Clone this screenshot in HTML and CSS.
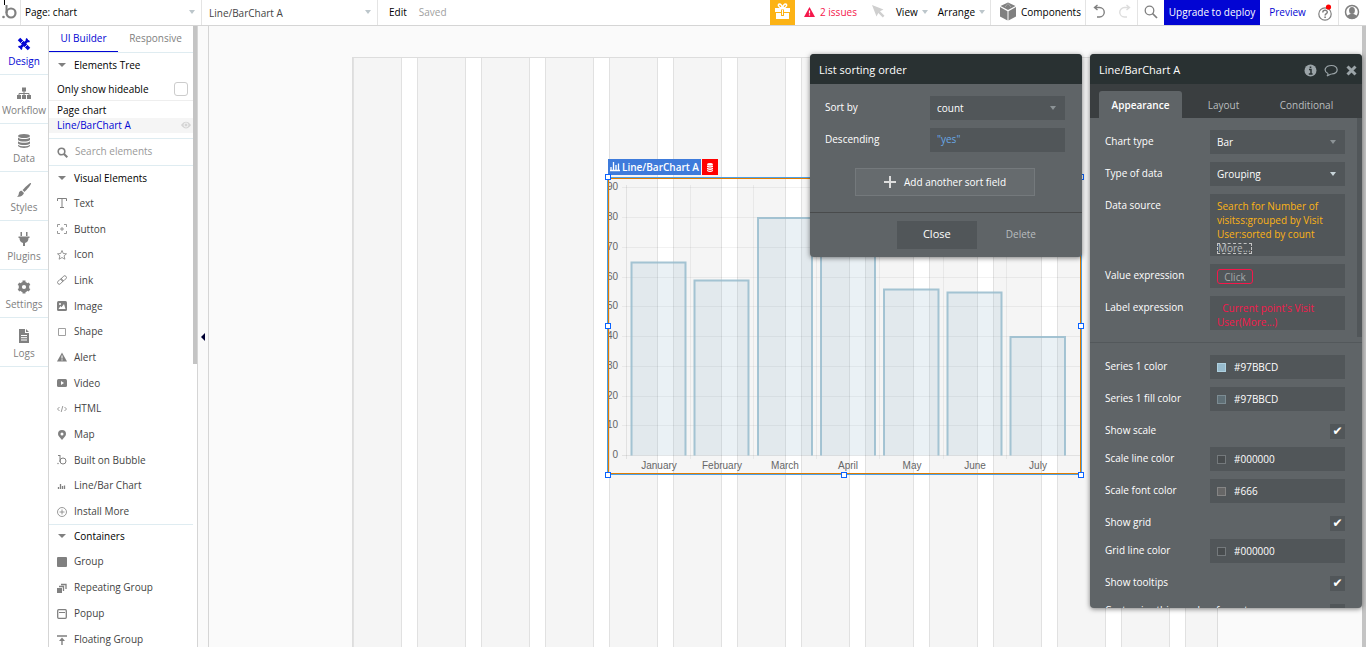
FILE: index.html
```html
<!DOCTYPE html>
<html lang="en">
<head>
<meta charset="utf-8">
<title>Page: chart</title>
<link rel="stylesheet" href="styles.css">
</head>
<body>
<header class="topbar">
  <a class="logo" href="#" aria-label="Home"><svg width="20" height="25" viewBox="0 0 20 25"><path d="M6.500 5v8" fill="none" stroke="#808080" stroke-width="2"/><circle cx="11" cy="13" r="4.500" fill="none" stroke="#808080" stroke-width="2.200"/><circle cx="3.500" cy="17" r="1.300" fill="#808080"/><path d="M4.500 0v5" stroke="#000"/></svg></a>
  <span class="pick pick-page"><select aria-label="Page"><option>Page: chart</option></select></span>
  <span class="pick pick-element"><select aria-label="Element"><option>Line/BarChart A</option></select></span>
  <button class="edit">Edit</button>
  <span class="saved">Saved</span>
  <span class="spacer"></span>
  <button class="gift" aria-label="Gift"><svg width="17" height="17" viewBox="0 0 17 17"><path d="M1 5h15v4H1zM2 10h13v6H2z" fill="#fff"/><path d="M8.500 5C4 5 3.500 1 5.500 1S8.500 5 8.500 5s1-4 3-4 1.500 4-3 4" fill="none" stroke="#fff" stroke-width="1.500"/><path d="M7 6.500h3V13H7z" fill="#fcb315"/><path d="M8 7h1v5H8z" fill="#fff"/></svg></button>
  <button class="issues"><svg width="11" height="10" viewBox="0 0 11 10"><path d="M5.500 0 11 10H0z" fill="#f5174b"/><path d="M5.500 3.500v3M5.500 7.300v1.200" stroke="#fff" stroke-width="1.200"/></svg>2 issues</button>
  <button class="arrow" aria-label="Pointer"><svg width="13" height="13" viewBox="0 0 13 13"><path d="M0 0 11.500 4.500 8 6.300l4.500 4.500-1.700 1.700L6.300 8 4.500 11.500z" fill="#cfcfcf"/></svg></button>
  <button class="menu">View<i class="caret"></i></button>
  <button class="menu">Arrange<i class="caret"></i></button>
  <button class="components"><svg width="16" height="19" viewBox="0 0 16 19"><path d="M8 .5 15.500 4 8 8 .5 4zM0 5l7.500 4.200V18.500L0 14.500zM16 5 8.500 9.200V18.500l7.500-4z" fill="#808080"/><path d="m5 5 3-3.500 3 3.500" fill="none" stroke="#a9a9a9"/></svg>Components</button>
  <button class="tool" aria-label="Undo"><svg width="14" height="15" viewBox="0 0 14 15"><path d="M5.500 1 2.500 3.500l3 2.500M3 3.500h4.500a4.700 4.700 0 0 1 0 9.500H5" fill="none" stroke="#808080" stroke-width="1.400"/></svg></button>
  <button class="tool redo" aria-label="Redo"><svg width="14" height="15" viewBox="0 0 14 15"><path d="M8.500 1l3 2.500-3 2.500M11 3.500H6.500a4.700 4.700 0 0 0 0 9.500H9" fill="none" stroke="#ddd" stroke-width="1.400"/></svg></button>
  <button class="tool find" aria-label="Search"><svg width="14" height="14" viewBox="0 0 14 14"><circle cx="5.500" cy="5.500" r="4.300" fill="none" stroke="#808080" stroke-width="1.300"/><path d="m8.500 8.500 4.500 4.500" stroke="#808080" stroke-width="1.700"/></svg></button>
  <button class="upgrade">Upgrade to deploy</button>
  <a class="preview" href="#">Preview</a>
  <button class="help" aria-label="Help"><svg width="16" height="18" viewBox="0 0 16 18"><circle cx="7" cy="10" r="6.200" fill="none" stroke="#808080" stroke-width="1.200"/><path d="M4.800 8.500c0-3 4.500-2.800 4.500-.3 0 1.500-2.200 1.500-2.200 3.300" fill="none" stroke="#808080" stroke-width="1.500"/><path d="M6.300 12.500h1.600V14H6.300z" fill="#808080"/><circle cx="10.500" cy="3" r="2.600" fill="#f00"/></svg></button>
  <button class="user" aria-label="Account"><svg width="16" height="16" viewBox="0 0 16 16"><circle cx="8" cy="8" r="6.500" fill="#fff" stroke="#808080" stroke-width="1.500"/><ellipse cx="8" cy="6.500" rx="2.900" ry="3.500" fill="#808080"/><path d="M3 12.500c1-2 3-2.500 5-2.500s4 .5 5 2.500c-2.500 3-7.500 3-10 0" fill="#808080"/></svg></button>
</header>

<main class="workspace">
  <nav class="rail">
    <a class="active" href="#"><svg viewBox="0 0 16 16"><g fill="none" stroke="#0205d3"><path d="M3 3l10 10" stroke-width="3.600"/><path d="M12 4 4 12" stroke-width="2.600"/><path d="M11 2.500c-1 1.500.5 3.500 2.500 2.500M5 13.500c1-1.500-.5-3.500-2.500-2.500" stroke-width="2"/></g><path d="m4.500 7.500 3-3M8.500 11.500l3-3" stroke="#fff" stroke-width=".8"/></svg>Design</a>
    <a href="#"><svg viewBox="0 0 16 16"><path d="M6 2.500h4v4H6zM1 10h4v4H1zM6 10h4v4H6zM11 10h4v4h-4z" fill="#808080"/><path d="M8 6v5M3 11V8.500h10V11" fill="none" stroke="#808080"/></svg>Workflow</a>
    <a href="#"><svg viewBox="0 0 16 16"><ellipse cx="8" cy="3" rx="6" ry="2" fill="#808080"/><path d="M2 4.500c2 2 10 2 12 0V7c-2 2-10 2-12 0zM2 8.300c2 2 10 2 12 0v2.200c-2 2-10 2-12 0zM2 11.700c2 2 10 2 12 0V13c-2 2.500-10 2.500-12 0z" fill="#808080"/></svg>Data</a>
    <a href="#"><svg viewBox="0 0 16 16"><path d="M15 1c1 1-4.500 7-6.500 9L6.500 8C9 5.500 14 0 15 1M5.700 8.700 8 11c-1 3-4 4.200-7 3.500 2-1 1.500-2.200 2-4 .5-1.200 1.500-1.800 2.700-1.800" fill="#808080"/></svg>Styles</a>
    <a href="#"><svg viewBox="0 0 16 16"><path d="M4.500 1h1.500v4H4.500zM10 1h1.500v4H10zM2.500 5.500h11V7h-1c0 2.500-1 4.500-3.500 5v3H7v-3C4.500 11.500 3.500 9.500 3.500 7h-1z" fill="#808080"/></svg>Plugins</a>
    <a href="#"><svg viewBox="0 0 16 16"><circle cx="8" cy="8" r="3.700" fill="none" stroke="#808080" stroke-width="3.200"/><path d="M8 1.500v2M8 12.500v2M2.400 4.800l1.700 1M11.900 10.200l1.700 1M2.400 11.200l1.700-1M11.900 5.800l1.700-1" stroke="#808080" stroke-width="3"/></svg>Settings</a>
    <a href="#"><svg viewBox="0 0 16 16"><path d="M3 1h6v4h4v10H3zM10 1l3 3h-3z" fill="#808080"/><path d="M5 7.500h6M5 9.700h6M5 12h6" stroke="#fff"/></svg>Logs</a>
  </nav>

  <aside class="palette">
    <div class="palette-body">
      <div class="tabs"><button class="on">UI Builder</button><button>Responsive</button></div>
      <h2 class="tree-title"><i class="caret dark"></i>Elements Tree</h2>
      <label class="hideable">Only show hideable<input type="checkbox"></label>
      <ul class="tree">
        <li>Page chart</li>
        <li class="current">Line/BarChart A<svg width="10" height="8" viewBox="0 0 10 8"><path d="M0 4c3-4.500 7-4.500 10 0-3 4.500-7 4.500-10 0" fill="#d5d5d5"/><circle cx="5" cy="4" r="2" fill="none" stroke="#f5f5f5"/></svg></li>
      </ul>
      <label class="search"><svg width="11" height="11" viewBox="0 0 11 11"><circle cx="4.500" cy="4.500" r="3.300" fill="none" stroke="#808080" stroke-width="1.600"/><path d="m7 7 3.300 3.300" stroke="#808080" stroke-width="2"/></svg><input type="search" placeholder="Search elements" aria-label="Search elements"></label>
      <h2><i class="caret dark"></i>Visual Elements</h2>
      <ul class="items visual">
        <li><svg viewBox="0 0 10 10"><path d="M.5 3V.5h9V3M5 .5v9M3 9.500h4" fill="none" stroke="#808080"/></svg>Text</li>
        <li><svg viewBox="0 0 10 10"><path d="M.5 3V.5H3M7 .5h2.500V3M9.500 7v2.500H7M3 9.500H.5V7M5 3v4M3 5h4" fill="none" stroke="#808080" stroke-width=".8"/></svg>Button</li>
        <li><svg viewBox="0 0 10 10"><path d="m5 .5 1.300 3 3.200.3-2.400 2 .8 3.400L5 7.500 2.100 9.200l.8-3.400-2.400-2 3.200-.3z" fill="none" stroke="#808080" stroke-width=".8"/></svg>Icon</li>
        <li><svg viewBox="0 0 10 10"><g fill="none" stroke="#808080" stroke-width=".9"><rect x="3.800" y="1.700" width="6" height="3.400" rx="1.700" transform="rotate(-45 6.800 3.400)"/><rect x=".2" y="4.900" width="6" height="3.400" rx="1.700" transform="rotate(-45 3.200 6.600)"/></g></svg>Link</li>
        <li><svg viewBox="0 0 10 10"><rect width="10" height="10" rx="1.500" fill="#808080"/><path d="m1.500 8 2-3 1 1.200L7 3l1.500 5z" fill="#fff"/><circle cx="3" cy="3" r="1" fill="#fff"/></svg>Image</li>
        <li><svg viewBox="0 0 10 10"><path d="M1.500 1.500h7v7h-7z" fill="none" stroke="#a0a0a0"/></svg>Shape</li>
        <li><svg viewBox="0 0 10 10"><path d="m5 .5 5 9H0z" fill="#808080"/><path d="M5 3.500v3M5 7.300v1.200" stroke="#fff"/></svg>Alert</li>
        <li><svg viewBox="0 0 10 10"><rect y="1" width="10" height="8" rx="1.500" fill="#808080"/><path d="m4 3 3 2-3 2z" fill="#fff"/></svg>Video</li>
        <li><svg viewBox="0 0 10 10"><path d="M2.500 3 .5 5l2 2M7.500 3l2 2-2 2M5.800 2 4.200 8" fill="none" stroke="#808080" stroke-width=".8"/></svg>HTML</li>
        <li><svg viewBox="0 0 10 10"><path d="M5 10C3 7.500 1 6 1 4a4 4 0 0 1 8 0c0 2-2 3.500-4 6" fill="#808080"/><circle cx="5" cy="4" r="1.500" fill="#fff"/></svg>Map</li>
        <li><svg viewBox="0 0 10 10"><path d="M3 0v7M1 .5h2" stroke="#808080"/><circle cx="6" cy="6" r="3" fill="none" stroke="#808080"/><circle cx="1" cy="8.500" r=".7" fill="#808080"/></svg>Built on Bubble</li>
        <li><svg viewBox="0 0 10 10"><path d="M1.500 8V6M3.500 8V3M5.500 8V5M7.500 8V4.500" stroke="#808080" stroke-width="1.300"/></svg>Line/Bar Chart</li>
        <li><svg viewBox="0 0 10 10"><circle cx="5" cy="5" r="4.500" fill="none" stroke="#808080" stroke-width=".8"/><path d="M5 2.500v5M2.500 5h5" stroke="#808080" stroke-width=".8"/></svg>Install More</li>
      </ul>
      <h2 class="ruled"><i class="caret dark"></i>Containers</h2>
      <ul class="items containers">
        <li><svg viewBox="0 0 10 10"><rect width="10" height="10" rx="1" fill="#808080"/></svg>Group</li>
        <li><svg viewBox="0 0 10 10"><path d="M0 5h5v5H0z" fill="#808080"/><path d="M2 3.500h4.500V8M4 1.500h5V6" fill="none" stroke="#808080" stroke-width="1.300"/></svg>Repeating Group</li>
        <li><svg viewBox="0 0 10 10"><rect x=".7" y=".7" width="8.600" height="8.600" rx="1" fill="none" stroke="#808080" stroke-width="1.300"/><path d="M2 3.500h6" stroke="#808080"/></svg>Popup</li>
        <li><svg viewBox="0 0 10 10"><path d="M0 1h10M5 10V5" stroke="#808080" stroke-width="1.400"/><path d="m5 2.500 3 3.500H2z" fill="#808080"/></svg>Floating Group</li>
      </ul>
    </div>
    <div class="thumb"></div>
  </aside>
  <button class="collapse" aria-label="Collapse panel"></button>

  <section class="canvas">
    <div class="page">
      <div class="chart">
        <div class="tag"><span class="name"><svg width="10" height="10" viewBox="0 0 10 10"><path d="M1 8V5M3.500 8V0M6 8V3M8.500 8V1.500M0 8.500h10" stroke="#fff" stroke-width="1.300"/></svg>Line/BarChart A</span><span class="db"><svg width="8" height="9" viewBox="0 0 8 9"><ellipse cx="4" cy="1.400" rx="3" ry="1.400" fill="#fff"/><path d="M1 2.500c1.500 1 4.500 1 6 0v1.600c-1.500 1-4.500 1-6 0zM1 4.800c1.500 1 4.500 1 6 0v1.500c-1.500 1-4.500 1-6 0zM1 7c1.500 1 4.500 1 6 0v1c-1.500 1.300-4.500 1.300-6 0z" fill="#fff"/></svg></span></div>
        <svg class="plot" width="471" height="294" viewBox="609 179 471 294">
          <g stroke="#000" stroke-opacity=".05">
            <path d="M622 187.500h458M622 217.500h458M622 247.500h458M622 277.500h458M622 306.500h458M622 336.500h458M622 366.500h458M622 396.500h458M622 425.500h458"/>
            <path d="M690.500 185v274M753.500 185v274M816.500 185v274M879.500 185v274M943.500 185v274M1006.500 185v274"/>
            <path d="M626.500 185v274M622 455.500h458" stroke-opacity=".08"/>
          </g>
          <g fill="#97bbcd" fill-opacity=".2" stroke="#97bbcd" stroke-opacity=".85" stroke-width="2">
            <path d="M631.500 455.500V262.500h54v193"/>
            <path d="M694.500 455.500V280.500h54v175"/>
            <path d="M758 455.500V218h54v237.500"/>
            <path d="M821 455.500V215h54v240.500"/>
            <path d="M884 455.500V289.500h54.500v166"/>
            <path d="M947.500 455.500V292.500h54v163"/>
            <path d="M1010.500 455.500V337h54.500v118.500"/>
          </g>
          <g class="axis" text-anchor="end">
            <text x="618" y="190">90</text><text x="618" y="220">80</text><text x="618" y="250">70</text><text x="618" y="280">60</text><text x="618" y="309">50</text><text x="618" y="339">40</text><text x="618" y="369">30</text><text x="618" y="399">20</text><text x="618" y="428">10</text><text x="618" y="458">0</text>
          </g>
          <g class="axis" text-anchor="middle">
            <text x="659" y="469">January</text><text x="722" y="469">February</text><text x="785" y="469">March</text><text x="848" y="469">April</text><text x="912" y="469">May</text><text x="975" y="469">June</text><text x="1038" y="469">July</text>
          </g>
        </svg>
        <i class="grip tl"></i><i class="grip tr"></i><i class="grip ml"></i><i class="grip mr"></i><i class="grip bl"></i><i class="grip bm"></i><i class="grip br"></i>
      </div>
    </div>
    <div class="canvas-scroll"></div>
  </section>

  <section class="dialog sorting">
    <h1>List sorting order</h1>
    <div class="fields">
      <div class="row"><label for="sort">Sort by</label><span class="drop"><select id="sort"><option>count</option></select></span></div>
      <div class="row"><label for="desc">Descending</label><input id="desc" class="box yes" value='"yes"'></div>
      <button class="add"><svg width="12" height="12" viewBox="0 0 12 12"><path d="M6 0v12M0 6h12" stroke="#ddd" stroke-width="2"/></svg>Add another sort field</button>
    </div>
    <footer><button class="close">Close</button><button class="delete">Delete</button></footer>
  </section>

  <section class="dialog props">
    <h1>Line/BarChart A<span class="icons">
      <svg width="13" height="13" viewBox="0 0 13 13"><circle cx="6.500" cy="6.500" r="6" fill="#9ba4a8"/><path d="M5 5.500h2V10M4.800 10h3.800M5.700 3.300h1.600" fill="none" stroke="#293132" stroke-width="1.500"/></svg>
      <svg width="15" height="13" viewBox="0 0 15 13"><path d="M4 9.500C-1 7 1 1.500 7.500 1.500S16 9.500 7.500 10c-1 0-2 .8-4.500 2 1-1 1.200-1.500 1-2.500" fill="none" stroke="#9ba4a8" stroke-width="1.200"/></svg>
      <svg width="11" height="11" viewBox="0 0 11 11"><path d="m1.500 1.500 8 8m0-8-8 8" stroke="#9ba4a8" stroke-width="3"/></svg></span></h1>
    <div class="ptabs"><button class="on">Appearance</button><button>Layout</button><button>Conditional</button></div>
    <div class="scroll">
      <div class="fields">
        <div class="row"><label for="ct">Chart type</label><span class="drop"><select id="ct"><option>Bar</option></select></span></div>
        <div class="row"><label for="td">Type of data</label><span class="drop bright"><select id="td"><option>Grouping</option></select></span></div>
        <div class="row"><span class="label">Data source</span><div class="box expr orange">Search for Number of<br>visitss:grouped by Visit<br>User:sorted by count<br><button class="more">More...</button></div></div>
        <div class="row"><span class="label">Value expression</span><div class="box"><button class="click">Click</button></div></div>
        <div class="row"><span class="label">Label expression</span><div class="box expr red">&nbsp; Current point's Visit<br>User(More...)</div></div>
      </div>
      <div class="fields second">
        <div class="row"><label for="c1">Series 1 color</label><span class="box color"><i class="sw blue"></i><input id="c1" value="#97BBCD"></span></div>
        <div class="row"><label for="c2">Series 1 fill color</label><span class="box color"><i class="sw fill"></i><input id="c2" value="#97BBCD"></span></div>
        <div class="row check"><label for="k1">Show scale</label><input id="k1" type="checkbox" checked></div>
        <div class="row"><label for="c3">Scale line color</label><span class="box color"><i class="sw dim"></i><input id="c3" value="#000000"></span></div>
        <div class="row"><label for="c4">Scale font color</label><span class="box color"><i class="sw gray"></i><input id="c4" value="#666"></span></div>
        <div class="row check"><label for="k2">Show grid</label><input id="k2" type="checkbox" checked></div>
        <div class="row"><label for="c5">Grid line color</label><span class="box color"><i class="sw dim"></i><input id="c5" value="#000000"></span></div>
        <div class="row check"><label for="k3">Show tooltips</label><input id="k3" type="checkbox" checked></div>
        <div class="row check"><label for="k4">Customize this number format</label><input id="k4" type="checkbox"></div>
      </div>
      <div class="pthumb"></div>
    </div>
  </section>
</main>
</body>
</html>
```
FILE: styles.css
```css
* { box-sizing: border-box; }
body {
  margin: 0;
  height: 100vh;
  display: flex;
  flex-direction: column;
  overflow: hidden;
  background: #fff;
  color: #000;
  font: 10px/14px "Open Sans", sans-serif;
}
button, input, select {
  font: inherit;
  color: inherit;
  border: 0;
  padding: 0;
  background: none;
  border-radius: 0;
  outline: 0;
}
select { appearance: none; width: 100%; height: 100%; }
a { text-decoration: none; }
ul { list-style: none; margin: 0; padding: 0; }
h1, h2 { margin: 0; font-weight: 400; font-size: 10px; }
svg { display: block; flex: none; }

.caret {
  display: inline-block;
  width: 0;
  height: 0;
  border: 3px solid transparent;
  border-top: 4px solid #bcc6cb;
  border-bottom: 0;
}
.caret.dark { border-width: 4px 4px 0; border-top-color: #808080; }

/* Top bar */
.topbar {
  flex: none;
  height: 26px;
  display: flex;
  align-items: stretch;
  border-bottom: 1px solid #d5d5d5;
}
.topbar > * { flex: none; display: flex; align-items: center; padding-bottom: 2px; white-space: nowrap; }
.topbar > .logo { width: 21px; padding: 0; border-right: 1px solid #e4e4e4; }
.pick { position: relative; border-right: 1px solid #e4e4e4; }
.pick::after {
  content: "";
  position: absolute;
  right: 6px;
  top: 10px;
  border: 3px solid transparent;
  border-top: 4px solid #bcc6cb;
  border-bottom: 0;
}
.pick-page { width: 181px; }
.pick-page select { padding-left: 4px; }
.topbar > .pick-element { width: 176px; padding-bottom: 0; color: #444; }
.pick-element select { padding-left: 7px; }
.edit { margin-left: 11px; }
.saved { margin-left: 12px; color: #a0a0a0; }
.topbar .spacer { flex: 1; }
.gift { width: 25px; justify-content: center; background: #fcb315; }
.issues { gap: 5px; margin: 0 15px 0 9px; color: #f5174b; }
.arrow { margin-right: 11px; }
.menu { gap: 4px; margin-right: 10px; }
.menu + .menu { margin-right: 5px; }
.components { gap: 5px; width: 96px; padding-left: 9px; border-left: 1px solid #e4e4e4; border-right: 1px solid #e4e4e4; }
.tool { width: 26px; justify-content: center; }
.redo { border-right: 1px solid #e4e4e4; }
.upgrade { width: 96px; justify-content: center; background: #0205d3; color: #fff; }
.preview { width: 55px; justify-content: center; color: #0205d3; }
.topbar > .help { width: 24px; padding: 0 0 0 3px; border-right: 1px solid #e4e4e4; }
.user { width: 27px; padding-left: 5px; }

/* Left rail */
.workspace { position: relative; flex: 1; min-height: 0; display: flex; }
.rail {
  flex: none;
  width: 49px;
  border-right: 1px solid #d5d5d5;
}
.rail a {
  display: flex;
  flex-direction: column;
  align-items: center;
  height: 49px;
  padding-top: 10px;
  gap: 2px;
  color: #808080;
  border-bottom: 1px solid #dfecf1;
}
.rail a:nth-child(3n) { height: 48px; padding-top: 9px; }
.rail svg { width: 16px; height: 16px; }
.rail .active { color: #0205d3; }

/* Element palette */
.palette { flex: none; width: 149px; display: flex; border-right: 1px solid #d5d5d5; overflow: hidden; }
.palette-body { width: 144px; }
.thumb { width: 4px; height: 338px; background: #c4c4c4; }
.tabs { display: flex; height: 27px; border-bottom: 1px solid #dfecf1; }
.tabs button { width: 75px; color: #808080; padding-bottom: 3px; }
.tabs .on { width: 69px; height: 26px; color: #0205d3; padding-bottom: 1px; border-bottom: 1px solid #0205d3; }
h2 { display: flex; align-items: center; gap: 8px; height: 24px; padding: 0 0 1px 9px; }
.palette h2.ruled { border-top: 1px solid #dfecf1; }
.hideable { display: flex; align-items: center; justify-content: space-between; height: 24px; padding: 0 5px 0 8px; border-bottom: 1px solid #eee; }
.hideable input { appearance: none; width: 14px; height: 14px; margin: 0; border: 1px solid #ccc; border-radius: 3px; }
.tree { height: 38px; border-bottom: 1px solid #dfecf1; }
.tree li { display: flex; align-items: center; justify-content: space-between; height: 17px; padding: 0 2px 0 8px; }
.tree .current { height: 15px; padding-bottom: 2px; background: #f5f5f5; color: #0205d3; }
.search { display: flex; align-items: center; gap: 7px; height: 27px; padding-left: 8px; border-bottom: 1px solid #dfecf1; }
.search input { width: 110px; padding-bottom: 2px; }
.search input::placeholder { color: #999; opacity: 1; }
.items { display: grid; grid-auto-rows: 1fr; color: #444; }
.items.visual { height: 334px; }
.items.containers { height: 104px; }
.items li { display: flex; align-items: center; gap: 7px; padding-left: 8px; }
.items svg { width: 10px; height: 10px; margin-top: 1px; }

.collapse { flex: none; width: 11px; border-right: 1px solid #d5d5d5; background: #fafafa; display: flex; align-items: center; justify-content: center; }
.collapse::after { content: ""; border: 4px solid transparent; border-right-color: #000033; border-left: 0; }

/* Canvas */
.canvas { position: relative; flex: 1; min-width: 0; overflow: hidden; background: #fafafa; }
.canvas-scroll { position: absolute; right: 0; top: 0; bottom: 0; width: 4px; background: #c4c4c4; }
.page {
  position: absolute;
  left: 143px;
  top: 31px;
  bottom: 0;
  width: 866px;
  border: 1px solid #ddd;
  border-bottom: 0;
  background: repeating-linear-gradient(to right, #e1e1e1 0 1px, #f5f5f5 1px 48px, #e1e1e1 48px 49px, #fff 49px 64px);
}
.chart { position: absolute; left: 254px; top: 119px; width: 475px; height: 298px; border: 1px solid #4aa0e8; border-right-width: 2px; }
.plot { box-sizing: content-box; border: 1px solid #e07c00; border-bottom-width: 1px; }
.axis { font: 10px "Liberation Sans", Arial, sans-serif; fill: #666; }
.tag { position: absolute; left: 0; bottom: 100%; margin-bottom: 3px; display: flex; gap: 1px; height: 16px; color: #fff; font-weight: 600; }
.tag span { display: flex; align-items: center; white-space: nowrap; }
.tag .name { gap: 2px; padding: 0 2px 1px; background: #3e7bdb; }
.tag .db { width: 16px; justify-content: center; background: #f00; }
.grip { position: absolute; width: 6px; height: 6px; border: 1px solid #0a63ff; background: #fff; }
.tl, .ml, .bl { left: -3px; }
.tr, .mr, .br { right: -4px; }
.tl, .tr { top: -4px; }
.ml, .mr { top: 145px; }
.bl, .bm, .br { bottom: -4px; }
.bm { left: 233px; }

/* Floating editors */
.dialog {
  position: absolute;
  top: 28px;
  width: 272px;
  border-radius: 4px;
  overflow: hidden;
  background: #5f6467;
  color: #fff;
  box-shadow: 0 1px 5px rgba(0, 0, 0, .5);
}
.dialog h1 { display: flex; align-items: center; justify-content: space-between; height: 30px; padding: 2px 5px 0 9px; background: #293132; font-size: 11px; }
.sorting { right: 284px; }
.fields { display: flex; flex-direction: column; gap: 8px; padding: 12px 17px 0 15px; }
.row { display: flex; justify-content: space-between; }
.row label, .row .label { line-height: 22px; white-space: nowrap; }
.drop, .box { width: 135px; min-height: 24px; background: #515659; }
.drop { position: relative; height: 24px; }
.drop select { padding-left: 7px; }
.drop::after { content: ""; position: absolute; right: 9px; top: 10px; border: 3px solid transparent; border-top: 4px solid #8c9396; border-bottom: 0; }
.drop.bright::after { border-top-color: #c9d5da; }
input.box { padding: 0 7px 2px; }
.yes { color: #68a8e8; }
.add { display: flex; align-items: center; justify-content: center; gap: 8px; align-self: center; width: 180px; height: 28px; margin: 8px 0 16px; background: #666b6e; border: 1px solid #74797c; }
.dialog footer { display: flex; justify-content: flex-end; align-items: center; gap: 29px; height: 45px; padding-right: 46px; border-top: 1px solid #494b4c; }
.close { width: 80px; height: 28px; padding-bottom: 2px; background: #515659; font-size: 11px; }
.delete { padding-bottom: 3px; color: #b9bdbf; }

.props { right: 4px; height: 554px; display: flex; flex-direction: column; }
.props h1, .ptabs { flex: none; }
.icons { display: flex; align-items: center; gap: 7px; padding-top: 1px; }
.ptabs { display: flex; align-items: flex-end; height: 34px; padding-left: 9px; background: #3a3e40; }
.ptabs button { width: 83px; height: 27px; border-radius: 3px 3px 0 0; color: #b9bdbf; }
.ptabs .on { background: #5f6467; color: #fff; font-weight: 600; }
.scroll { position: relative; flex: 1; min-height: 0; overflow: hidden; }
.pthumb { position: absolute; right: 0; top: 0; width: 5px; height: 219px; background: #515659; }
.expr { padding: 5px 7px 1px; white-space: nowrap; }
.orange { color: #fcb315; }
.red { color: #f5174b; }
.more { display: inline-block; height: 11px; line-height: 9px; border: 1px dashed #c5c5c5; color: #b9bdbf; }
.click { display: block; width: 36px; height: 15px; margin: 5px 7px 0; line-height: 12px; border: 1px solid #f5174b; border-radius: 3px; color: #a5a9ab; }
.second { margin-top: 12px; border-top: 1px solid #53585b; }
.color { display: flex; align-items: center; padding-left: 7px; gap: 8px; }
.color input { width: 80px; padding-bottom: 1px; }
.sw { width: 9px; height: 9px; border: 1px solid #74797c; }
.blue { background: #97bbcd; border-color: #aed0df; }
.fill { background: #5f6f76; border-color: #7c8c93; }
.dim { background: #484c4e; }
.gray { background: #666; border-color: #858585; }
.check { height: 20px; align-items: flex-start; }
.check input { appearance: none; width: 15px; height: 15px; margin: 5px 0 0; background: #515659; }
.check input:checked::after { content: "✔"; display: block; text-align: center; font: 12px/15px "DejaVu Sans", sans-serif; color: #fff; }
```
